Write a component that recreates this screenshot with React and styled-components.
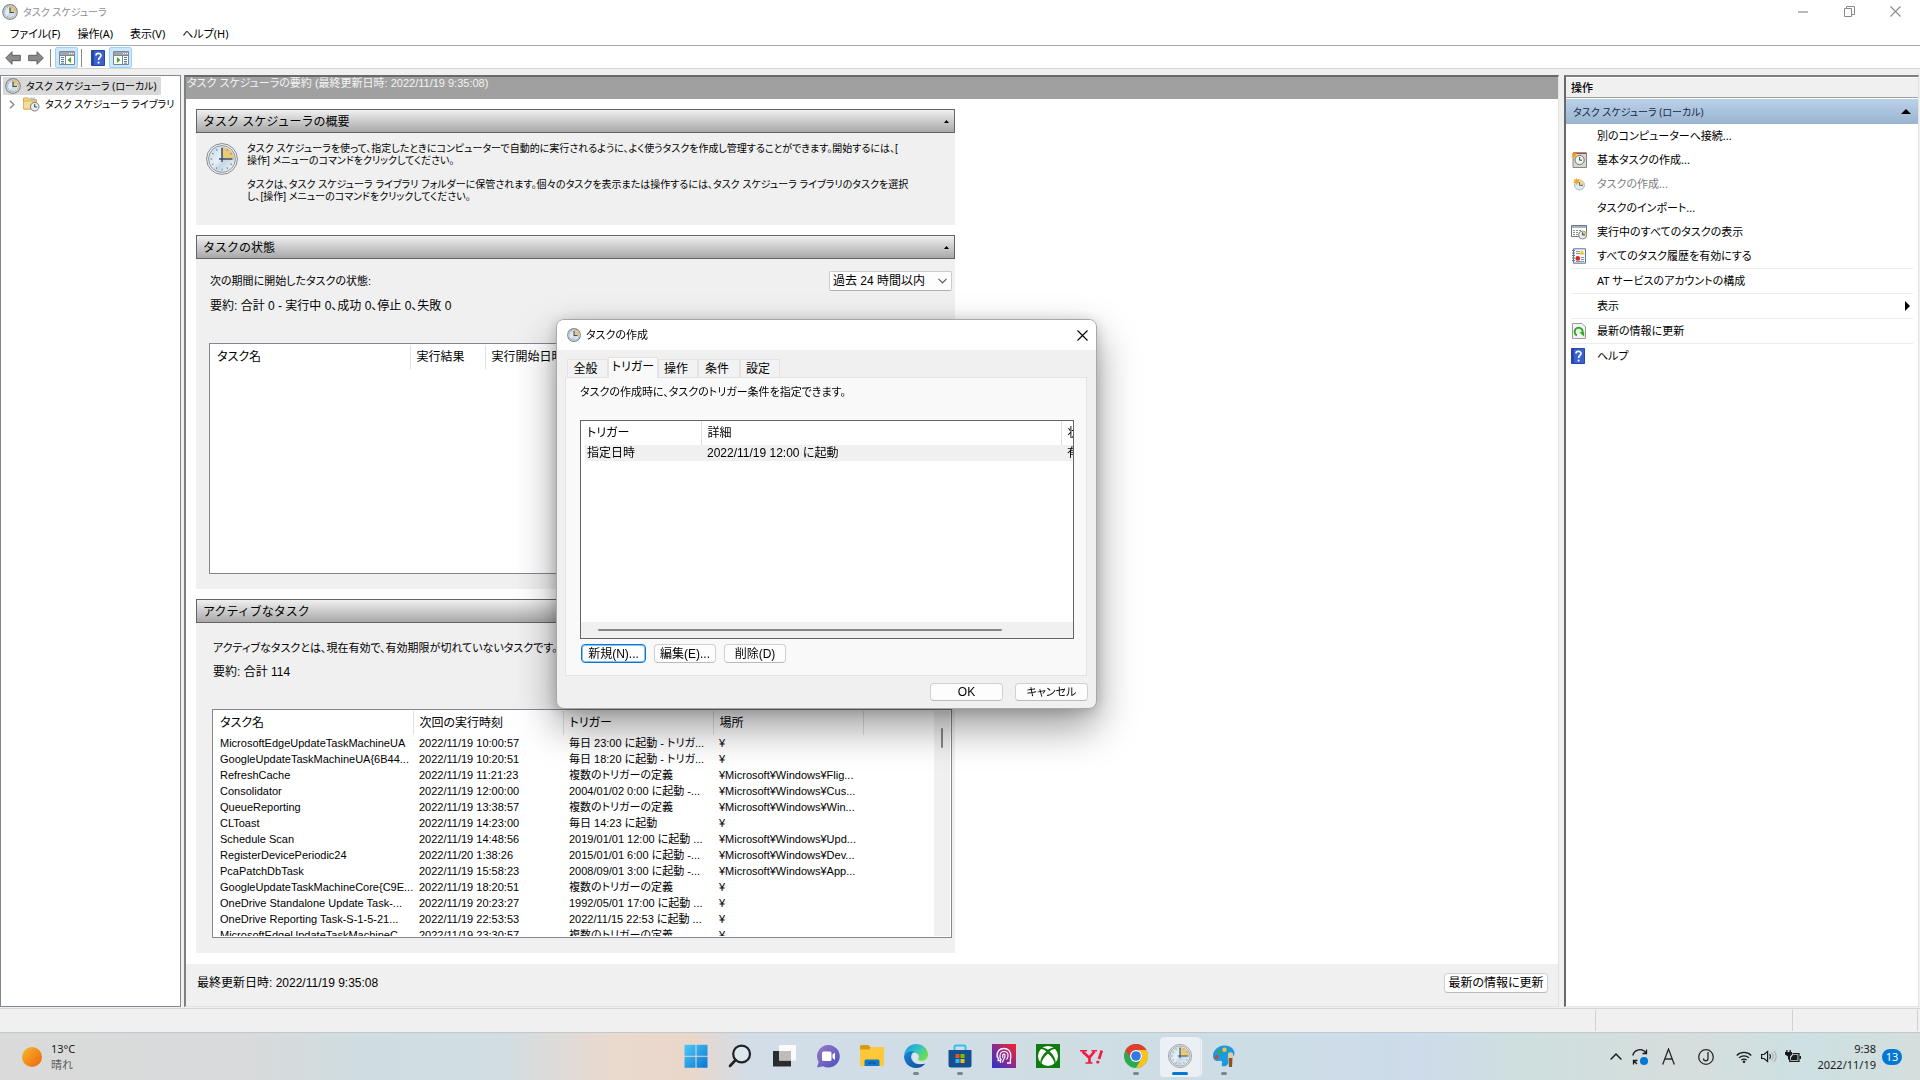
import React from "react";
import styled, { createGlobalStyle, css } from "styled-components";

const gothic = `"Liberation Sans", "Noto Sans CJK JP", sans-serif`;
const ui = `"Noto Sans", "Noto Sans CJK JP", sans-serif`;

const GlobalStyle = createGlobalStyle`
  *, *::before, *::after { box-sizing: border-box; }
  body {
    margin: 0;
    background: #f0f0f0;
    color: #000;
    font-family: ${gothic};
    font-size: 12px;
    line-height: 16px;
    font-feature-settings: "palt";
    overflow: hidden;
  }
  button, select { font: inherit; color: inherit; font-feature-settings: inherit; }
  button { padding: 0; border: 0; background: none; }
  h1, h2, h3, p, ul { margin: 0; padding: 0; font-weight: 400; font-size: inherit; }
  ul { list-style: none; }
  svg { display: block; flex: none; }
`;

/* ---------- window frame ---------- */
const Desktop = styled.div`
  display: flex;
  flex-direction: column;
  height: 100vh;
`;
const TitleBar = styled.header`
  display: flex;
  align-items: center;
  height: 23px;
  padding: 0 2px;
  background: #fff;
  color: #8f8f8f;
  font-family: ${ui};
  font-size: 10px;
`;
const WindowName = styled.span`
  margin-left: 5px;
`;
const Spacer = styled.div`
  flex: 1;
`;
const CaptionButton = styled.button`
  display: grid;
  place-items: center;
  width: 46px;
  height: 20px;
  color: #8a8a8a;
`;
const MenuBar = styled.nav`
  display: flex;
  gap: 17px;
  height: 23px;
  padding: 0 10px 1px;
  background: #fff;
  border-bottom: 1px solid #a9a9ad;
  font-family: ${ui};
  font-size: 11px;
`;
const ToolBar = styled.div`
  display: flex;
  align-items: center;
  height: 23px;
  padding: 1px 1px 0;
  background: #fff;
  border-bottom: 1px solid #d4d4d4;
`;
const ToolButton = styled.button`
  display: grid;
  place-items: center;
  width: 23px;
  height: 21px;
  border: 1px solid ${(p) => (p.$on ? "#99d1ff" : "transparent")};
  border-radius: 2px;
  background: ${(p) => (p.$on ? "#cce8ff" : "transparent")};
`;
const ToolRule = styled.span`
  width: 1px;
  height: 18px;
  margin: 0 4px 0 3px;
  background: #8a8a8a;
`;
const Workspace = styled.main`
  display: grid;
  grid-template-columns: 181px minmax(0, 1fr) 355px;
  gap: 3px;
  flex: 1;
  min-height: 0;
  padding: 6px 1px 1px 0;
`;
const StatusBar = styled.footer`
  display: grid;
  grid-template-columns: 1fr 197px 125px;
  height: 24px;
  border-top: 1px solid #d4d4d4;
  padding: 1px 2px 1px 0;
`;
const StatusCell = styled.span`
  border-right: 1px solid #d0d0d0;
`;

/* ---------- tree ---------- */
const TreePane = styled.aside`
  border: 1px solid #828790;
  background: #fff;
  padding: 1px 2px;
  font-family: ${ui};
  font-size: 10px;
  overflow: hidden;
  white-space: nowrap;
`;
const TreeRow = styled.li`
  display: flex;
  align-items: center;
  gap: 5px;
  height: 18px;
  width: fit-content;
  padding: 0 4px 0 ${(p) => p.$indent}px;
  background: ${(p) => (p.$selected ? "#d9d9d9" : "transparent")};
  border-radius: 1px;
`;

/* ---------- centre ---------- */
const CentrePane = styled.section`
  display: flex;
  flex-direction: column;
  min-width: 0;
  margin-right: 2px;
  border-style: solid;
  border-width: 2px 1px 1px 2px;
  border-color: #696969 #e3e3e3 #e3e3e3 #808080;
  background: #fff;
`;
const CentreHead = styled.h1`
  height: 22px;
  flex: none;
  padding-left: 1px;
  background: #a0a0a0;
  color: #f4f4f4;
  font-size: 11px;
  line-height: 12px;
`;
const Cards = styled.div`
  display: flex;
  flex-direction: column;
  gap: 10px;
  flex: 1;
  min-height: 0;
  padding: 10px;
`;
const Card = styled.section`
  max-width: 759px;
  background: #f0f0f0;
`;
const CardHead = styled.h2`
  display: flex;
  align-items: center;
  justify-content: space-between;
  height: 24px;
  padding: 1px 5px 0 6px;
  border: 1px solid #646464;
  background: linear-gradient(#f0f0f0, #a8a8a8);
  font-feature-settings: normal;
`;
const Overview = styled.div`
  display: flex;
  gap: 9px;
  min-height: 92px;
  padding: 10px;
  font-size: 10px;
  line-height: 12px;
`;
const Paragraph = styled.p`
  margin-bottom: 12px;
  white-space: nowrap;
`;
const StateBody = styled.div`
  padding: 12px 3px 15px 13px;
`;
const StateTop = styled.div`
  display: flex;
  align-items: center;
  justify-content: space-between;
  height: 20px;
  padding-left: 1px;
`;
const Small = styled.span`
  font-size: 11px;
`;
const Summary = styled.p`
  margin: 7px 0 29px 1px;
`;
const ActiveBody = styled.div`
  padding: 17px 3px 15px 16px;
`;
const ActiveNote = styled.p`
  margin: 0 0 8px 1px;
  font-size: 11px;
`;
const ActiveSummary = styled.p`
  margin: 0 0 29px 1px;
`;
const SelectBox = styled.label`
  position: relative;
  width: 123px;
  height: 20px;
`;
const Period = styled.select`
  appearance: none;
  width: 100%;
  height: 100%;
  padding: 0 20px 0 3px;
  border: 1px solid #ccc;
  border-bottom-color: #b0b0b0;
  border-radius: 2px;
  background: #fdfdfd;
`;
const SelectArrow = styled.span`
  position: absolute;
  right: 5px;
  top: 7px;
  pointer-events: none;
`;
const ListBox = styled.div`
  display: flex;
  height: ${(p) => p.$height}px;
  border: 1px solid #828790;
  background: #fff;
  padding: 1px;
  overflow: hidden;
`;
const ListMain = styled.div`
  flex: 1;
  min-width: 0;
  overflow: hidden;
`;
const Table = styled.table`
  table-layout: fixed;
  width: ${(p) => p.$width}px;
  border-collapse: collapse;
  white-space: nowrap;

  th, td {
    overflow: hidden;
    text-align: left;
    font-weight: 400;
    padding: 0 0 0 6px;
  }
  th { height: 24px; border-right: 1px solid #e0e0e0; }
  td { height: 16px; line-height: 16px; }
`;
const ScrollTrack = styled.div`
  width: 16px;
  flex: none;
  background: #f0f0f0;
  padding: 17px 7px;
`;
const ScrollThumb = styled.div`
  width: 2px;
  height: 20px;
  border-radius: 1px;
  background: #868686;
`;
const CentreFoot = styled.div`
  display: flex;
  justify-content: space-between;
  align-items: center;
  height: 42px;
  flex: none;
  padding: 0 10px 4px 11px;
  background: #f0f0f0;
`;
const PushButton = styled.button`
  height: ${(p) => p.$height || 20}px;
  width: ${(p) => p.$width}px;
  border: 1px solid #d0d0d0;
  border-bottom-color: #bababa;
  border-radius: 4px;
  background: #fdfdfd;
  line-height: 16px;
  white-space: nowrap;
  ${(p) =>
    p.$focus &&
    css`
      border-color: #0078d4;
      box-shadow: inset 0 0 0 1px #8cc2ec;
    `}
`;

/* ---------- actions ---------- */
const ActionsPane = styled.aside`
  border-style: solid;
  border-width: 2px 1px 1px 2px;
  border-color: #808080 #e3e3e3 #e3e3e3 #696969;
  background: #fff;
  font-family: ${ui};
  font-size: 11px;
`;
const ActionsTitle = styled.h2`
  height: 21px;
  padding: 1px 5px;
  border-top: 1px solid #fff;
  border-bottom: 1px solid #a0a0a0;
  background: #f0f0f0;
  font-weight: 500;
  line-height: 18px;
  margin-bottom: 1px;
`;
const ActionsGroup = styled.h3`
  display: flex;
  align-items: center;
  justify-content: space-between;
  height: 25px;
  padding: 0 7px;
  background: linear-gradient(#bad1e9, #9ab4d1);
  color: #1a2a44;
  font-size: 10px;
`;
const ActionItem = styled.li`
  height: ${(p) => (p.$rule ? 25 : 24)}px;
  margin: 0 5px;
  border-bottom: ${(p) => (p.$rule ? "1px solid #ececec" : "0")};
`;
const ActionButton = styled.button`
  display: grid;
  grid-template-columns: 16px 1fr auto;
  gap: 10px;
  align-items: center;
  width: 100%;
  height: 24px;
  padding-right: 3px;
  text-align: left;
  color: ${(p) => (p.disabled ? "#808080" : "#000")};
`;

/* ---------- dialog ---------- */
const Dialog = styled.div`
  position: fixed;
  left: 556px;
  top: 319px;
  width: 541px;
  border: 1px solid #a8a8a8;
  border-radius: 8px;
  background: #f0f0f0;
  box-shadow: 0 18px 40px rgba(0, 0, 0, 0.4), 0 2px 14px rgba(0, 0, 0, 0.18);
  overflow: hidden;
`;
const DialogTitle = styled.div`
  display: flex;
  align-items: center;
  gap: 5px;
  height: 30px;
  padding-left: 10px;
  background: #fff;
  font-family: ${ui};
  font-size: 11px;
`;
const DialogClose = styled.button`
  display: grid;
  place-items: center;
  width: 28px;
  height: 28px;
`;
const Tabs = styled.div`
  display: flex;
  align-items: flex-end;
  height: 27px;
  padding-left: 10px;
`;
const Tab = styled.button`
  width: ${(p) => p.$width}px;
  height: ${(p) => (p.$on ? 21 : 18)}px;
  padding: 0 ${(p) => (p.$on ? 0 : 4)}px ${(p) => (p.$on ? 2 : 0)}px 0;
  border: 1px solid #e3e3e3;
  border-bottom: 0;
  background: ${(p) => (p.$on ? "#f9f9f9" : "#f2f2f2")};
  margin-bottom: ${(p) => (p.$on ? -1 : 0)}px;
  z-index: ${(p) => (p.$on ? 1 : 0)};
  line-height: 16px;
`;
const TabPanel = styled.div`
  margin: 0 9px 0 8px;
  padding: 6px 12px 12px 14px;
  border: 1px solid #e3e3e3;
  background: #f9f9f9;
`;
const Hint = styled.p`
  margin-bottom: 20px;
  font-size: 11px;
`;
const TriggerBox = styled.div`
  display: flex;
  flex-direction: column;
  height: 219px;
  border: 1px solid #646464;
  background: #fff;
  overflow: hidden;
`;
const HScroll = styled.div`
  height: 16px;
  padding: 7px 71px 7px 17px;
  background: #f0f0f0;
`;
const HThumb = styled.div`
  height: 2px;
  border-radius: 1px;
  background: #868686;
`;
const TriggerRow = styled.tr`
  background: linear-gradient(90deg, #fff 4px, #f0f0f0 4px);
`;
const ButtonRow = styled.div`
  display: flex;
  gap: 8px;
  padding: 5px 0 0 1px;
`;
const DialogFoot = styled.div`
  display: flex;
  justify-content: flex-end;
  gap: 12px;
  padding: 7px 8px 7px;
`;

/* ---------- taskbar ---------- */
const TaskBar = styled.footer`
  display: grid;
  grid-template-columns: 1fr auto 1fr;
  align-items: center;
  height: 48px;
  flex: none;
  border-top: 1px solid #bfc8cc;
  background: linear-gradient(90deg, #dadada 0, #d8dadb 13%, #cfdde1 19%, #d1dde3 26%, #ead9cd 32%, #e9d7ca 36%, #d2dde8 39%, #cfdde3 55%, #cddde6 66%, #cddbea 74%, #cfdfde 80%, #d6dddd 88%, #cde0e2 94%, #d5dedd 100%);
  font-family: ${ui};
  font-size: 11px;
  color: #1a1a1a;
`;
const Weather = styled.button`
  display: flex;
  align-items: center;
  gap: 9px;
  width: fit-content;
  padding-left: 22px;
  text-align: left;
`;
const Muted = styled.span`
  display: block;
  color: #5c5c5c;
`;
const Apps = styled.div`
  display: flex;
  gap: 4px;
`;
const AppButton = styled.button`
  display: flex;
  flex-direction: column;
  align-items: center;
  width: 40px;
  height: 40px;
  padding-top: 7px;
  border-radius: 4px;
  ${(p) =>
    p.$state === "active" &&
    css`
      background: #eaf0f5;
      box-shadow: 2px 0 0 -1px #dfe7ec, 3px 0 0 -1px #eef3f6;
    `}
  &::after {
    content: "";
    width: ${(p) => (p.$state === "active" ? 16 : 6)}px;
    height: 3px;
    margin-top: 4px;
    border-radius: 2px;
    background: ${(p) =>
      p.$state === "active" ? "#0078d4" : p.$state === "open" ? "#7c858a" : "transparent"};
  }
`;
const Tray = styled.div`
  display: flex;
  align-items: center;
  justify-content: flex-end;
  padding-right: 18px;
`;
const TrayIcon = styled.button`
  display: grid;
  place-items: center;
  width: ${(p) => p.$width}px;
  height: 40px;
`;
const Clock = styled.button`
  margin: 0 6px 0 9px;
  text-align: right;
`;
const Line = styled.span`
  display: block;
`;
const Badge = styled.span`
  width: 20px;
  border-radius: 8px;
  background: #0078d4;
  color: #fff;
  text-align: center;
`;

/* ---------- drawings ---------- */
function ClockIcon({ size = 16 }) {
  const ticks = Array.from({ length: 12 }, (_, i) => i * 30);
  return (
    <svg width={size} height={size} viewBox="0 0 32 32" aria-hidden="true">
      <defs>
        <linearGradient id="face" x1="0" y1="0" x2="1" y2="1">
          <stop offset="0" stopColor="#c3d6e4" />
          <stop offset=".45" stopColor="#e9f1f7" />
          <stop offset=".6" stopColor="#c6d8e5" />
          <stop offset="1" stopColor="#fbfdfe" />
        </linearGradient>
      </defs>
      <circle cx="16" cy="16" r={size > 20 ? 15.4 : 14.6} fill="#f4f4f4" stroke="#85888b" strokeWidth={size > 20 ? 1 : 2.4} />
      <circle cx="16" cy="16" r={size > 20 ? 13.4 : 12} fill="url(#face)" stroke="#8f9498" strokeWidth="1" />
      <path d="M16 16V4A12 12 0 0 1 28 16z" fill="#edc877" />
      {ticks.map((a) => (
        <path key={a} d="M16 4.500v1.800" stroke="#7892ad" strokeWidth="1.200" transform={`rotate(${a} 16 16)`} />
      ))}
      <path d={size > 20 ? "M16 5v14M13 16h13" : "M16 7v11M15 17h9"} stroke="#33526f" strokeWidth={size > 20 ? 1.5 : 2.4} fill="none" />
    </svg>
  );
}
const Arrow = ({ flip }) => (
  <svg width="16" height="16" viewBox="0 0 16 16" aria-hidden="true">
    <path
      d="M.7 8 7 1.700v3.600h8.300v5.400H7v3.600z"
      fill="#8a8a8a"
      stroke="#5f5f5f"
      transform={flip ? "matrix(-1 0 0 1 16 0)" : undefined}
    />
  </svg>
);
const PaneIcon = ({ right }) => (
  <svg width="16" height="14" viewBox="0 0 16 14" aria-hidden="true">
    <g transform={right ? "matrix(-1 0 0 1 16 0)" : undefined}>
      <path d="M.5.5h15v13H.5z" fill="#fff" stroke="#7e8790" />
      <path d="M1 1h14v3H1z" fill="#9ea7ae" />
      <path d="M1 4.500h14M6.500 5v8" stroke="#7e8790" />
      <path d="M2 6.500h3M2 8.500h3M2 10.500h3M2 12.200h3" stroke="#4f7fae" />
      <path d="M8.500 9l3.500-3v6z" fill="#35b01c" />
    </g>
    <path d="M10 2.500h1M12 2.500h1M14 2.500h1" stroke="#fff" />
  </svg>
);
const HelpIcon = () => (
  <svg width="14" height="16" viewBox="0 0 14 16" aria-hidden="true">
    <path d="M.5.5h13v15H.5z" fill="#3a62ce" stroke="#2546a5" />
    <path d="M1 1h2v14H1z" fill="#2247b1" />
    <path d="M5 5.500C5 2.700 10 2.700 10 5.400 10 7.400 7.600 7.400 7.600 10" fill="none" stroke="#fff" strokeWidth="1.700" />
    <circle cx="7.600" cy="12.600" r="1.100" fill="#fff" />
  </svg>
);
const FolderClock = () => (
  <svg width="17" height="16" viewBox="0 0 17 16" aria-hidden="true">
    <path d="M.5 2h5l1 1.500h7V13H.5z" fill="#f3d384" stroke="#d9ab48" />
    <path d="M7 1.500h5v2H7z" fill="#a9cbe8" />
    <path d="M.5 5h13v8H.5z" fill="#f8dd98" stroke="#dcb25a" />
    <circle cx="11.700" cy="10.700" r="4.300" fill="#e7eef3" stroke="#75797c" />
    <path d="M11.700 8v3H14" fill="none" stroke="#2d465c" />
  </svg>
);
const Chevron = ({ d, w, h, color = "#5a5a5a", sw = 1.2 }) => (
  <svg width={w} height={h} viewBox={`0 0 ${w} ${h}`} aria-hidden="true">
    <path d={d} fill="none" stroke={color} strokeWidth={sw} />
  </svg>
);
const Triangle = ({ w, h, d }) => (
  <svg width={w} height={h} viewBox={`0 0 ${w} ${h}`} aria-hidden="true">
    <path d={d} fill="#000" />
  </svg>
);
const Cross = () => (
  <svg width="11" height="11" viewBox="0 0 11 11" aria-hidden="true">
    <path d="M.5.5l10 10M10.500.5l-10 10" stroke="currentColor" strokeWidth="1.100" />
  </svg>
);
const Spark = () => <path d="M4 0l1 2 2.600-.6L6.500 4 8 6 5.500 6 4 8.300 3 6 .2 5.600 2 4 .8 1.600 3 2z" fill="#f6a21b" />;
const BasicTaskIcon = () => (
  <svg width="16" height="16" viewBox="0 0 16 16" aria-hidden="true">
    <path d="M2 1h13.500v14.500H2z" fill="#d8d4cf" stroke="#8c8580" />
    <path d="M2 .5h13.500V2H2z" fill="#9c4f40" />
    <circle cx="8.600" cy="8" r="4.600" fill="#eef3ee" stroke="#6b7a70" />
    <path d="M8.600 5v3.200H11" fill="none" stroke="#2f4a3c" />
    <g transform="scale(.75)"><Spark /></g>
  </svg>
);
const NewTaskIcon = () => (
  <svg width="16" height="16" viewBox="0 0 16 16" aria-hidden="true">
    <circle cx="8.500" cy="9" r="5" fill="#dfe9ee" stroke="#a9bcc4" />
    <path d="M8.500 9V4A5 5 0 0 1 13.500 9z" fill="#f3d28e" />
    <path d="M8.500 6v3.400H12" fill="none" stroke="#5b6c78" />
    <g transform="translate(2 2) scale(.85)"><Spark /></g>
  </svg>
);
const RunningIcon = () => (
  <svg width="16" height="16" viewBox="0 0 16 16" aria-hidden="true">
    <path d="M.5 1.500h15v11H.5z" fill="#fff" stroke="#6f767b" />
    <path d="M1 2h14v2H1z" fill="#a7b4bd" />
    <path d="M2 6.500h9M2 8.500h7M2 10.500h5" stroke="#8a8f93" strokeDasharray="2 1" />
    <circle cx="11.600" cy="11" r="4" fill="#e6edf2" stroke="#84898c" />
    <path d="M11.600 11V7.300A3.700 3.700 0 0 1 15.300 11z" fill="#e9c87c" />
    <path d="M11.600 8.400V11H14" fill="none" stroke="#2d465c" />
  </svg>
);
const HistoryIcon = () => (
  <svg width="16" height="16" viewBox="0 0 16 16" aria-hidden="true">
    <path d="M2.500.8h12v14.400h-12z" fill="#f6f8fb" stroke="#56719c" />
    <path d="M1 2.500h3M1 5h3M1 7.500h3M1 10h3M1 12.500h3" stroke="#777" />
    <path d="M5 3.500h4M5 5.500h4M10 9.500h3M10 11.500h3M5 13.500h8" stroke="#8a94a3" />
    <path d="M11 2l2.600 4.600H8.400z" fill="#f1c51c" />
    <circle cx="6.800" cy="10.400" r="2.300" fill="#d02b1f" />
  </svg>
);
const RefreshIcon = () => (
  <svg width="16" height="16" viewBox="0 0 16 16" aria-hidden="true">
    <path d="M1.500.5H11L14.500 4v11.500h-13z" fill="#f4f5f4" stroke="#9a9a9a" />
    <path d="M6 12.300A4 4 0 1 1 11.200 10.500" fill="none" stroke="#2fac26" strokeWidth="2" />
    <path d="M8.200 9.200h5v4.600z" fill="#2fac26" />
  </svg>
);

const Svg24 = ({ children }) => (
  <svg width="24" height="24" viewBox="0 0 24 24" aria-hidden="true">{children}</svg>
);
const appIcons = {
  Windows: (
    <Svg24>
      <defs><linearGradient id="win" x1="0" y1="0" x2="1" y2="1"><stop offset="0" stopColor="#4ccaf8" /><stop offset="1" stopColor="#0a74d2" /></linearGradient></defs>
      <path d="M.5.8h11v11H.5zM12.500.8h11v11h-11zM.5 12.800h11v11H.5zM12.500 12.800h11v11h-11z" fill="url(#win)" />
    </Svg24>
  ),
  検索: (
    <Svg24>
      <circle cx="13.600" cy="10" r="8.400" fill="#dde7ee" stroke="#222" strokeWidth="2.200" />
      <path d="M7.600 16L2 22" stroke="#222" strokeWidth="2.600" strokeLinecap="round" />
    </Svg24>
  ),
  "タスク ビュー": (
    <Svg24>
      <path d="M1 7h18v15.500H1z" fill="#2c2c2c" />
      <path d="M7 1h17v15.500H7z" fill="#fbfbfb" />
      <path d="M7 7h12v9.500H7z" fill="#bdbdbd" />
    </Svg24>
  ),
  チャット: (
    <Svg24>
      <defs><linearGradient id="chat" x1="0" y1="0" x2="1" y2="1"><stop offset="0" stopColor="#9a7cc0" /><stop offset="1" stopColor="#4a4fc4" /></linearGradient></defs>
      <path d="M12.500 1a11.300 11.300 0 1 1-5.300 21.300L1 23.500l1.600-5.500A11.300 11.300 0 0 1 12.500 1z" fill="url(#chat)" />
      <rect x="6" y="7.500" width="9.500" height="9.500" rx="1.500" fill="#fff" />
      <path d="M16.500 10.500L19 8.500v7.500l-2.500-2z" fill="#fff" />
    </Svg24>
  ),
  エクスプローラー: (
    <Svg24>
      <path d="M0 2.500q0-1.500 1.500-1.500h7l2 2.500V6H0z" fill="#d99a0b" />
      <path d="M0 5.500h9L11.500 3H24v19H0z" fill="#fdc93a" />
      <path d="M4.500 22v-5q0-1.500 1.500-1.500h12q1.500 0 1.500 1.500v5z" fill="#1378c6" />
      <path d="M8 19h8" stroke="#0c5a9c" strokeWidth="1.500" />
    </Svg24>
  ),
  Edge: (
    <Svg24>
      <defs>
        <linearGradient id="edgeTop" x1="0" y1="0" x2="1" y2=".6"><stop offset="0" stopColor="#1f8fd8" /><stop offset=".5" stopColor="#2fc0cf" /><stop offset="1" stopColor="#6be04c" /></linearGradient>
        <linearGradient id="edgeLow" x1="0" y1="0" x2="1" y2="1"><stop offset="0" stopColor="#1b85d8" /><stop offset="1" stopColor="#0b4a9c" /></linearGradient>
      </defs>
      <path d="M0 12C.5 5 5.500 0 12 0c7 0 12 5 12 10.500 0 4-3 6.300-6.500 6.300-2.500 0-3.800-1-3-2 1.300-1.500 1-5-3.500-6C6.500 7.800 2 9 0 12z" fill="url(#edgeTop)" />
      <path d="M0 12c2-4 7-5.500 10.500-4.300C7 9 6.500 13 8 16c2 4 7.500 5.500 13.500 3.200C19 22.500 15.500 24 12 24 5 24 0 18.500 0 12z" fill="url(#edgeLow)" />
      <path d="M11 8.900c-4 2-2.500 8 2 10 3 1.300 6 1 8.500.3l1-1.500c-5 2.300-10 .5-10-3.500 0-2 1-2.600.7-4z" fill="#dbe7ee" />
    </Svg24>
  ),
  Store: (
    <Svg24>
      <path d="M6.500 6V3q0-1.500 1.500-1.500h8q1.500 0 1.500 1.500v3" fill="none" stroke="#36c0f2" strokeWidth="2" />
      <path d="M.5 6h23v15q0 2.500-2.500 2.500H3Q.5 23.500.5 21z" fill="#14508d" />
      <path d="M7.500 10h4v4h-4z" fill="#f25022" /><path d="M12.500 10h4v4h-4z" fill="#7fba00" />
      <path d="M7.500 15h4v4h-4z" fill="#38b6f1" /><path d="M12.500 15h4v4h-4z" fill="#ffb900" />
    </Svg24>
  ),
  Assistant: (
    <Svg24>
      <defs><linearGradient id="ast" x1="0" y1="1" x2="1" y2="0"><stop offset="0" stopColor="#2b35c6" /><stop offset=".5" stopColor="#8d2a93" /><stop offset="1" stopColor="#fb2323" /></linearGradient></defs>
      <path d="M0 0h24v24H0z" fill="url(#ast)" />
      <path d="M8.500 19v-2.500H6.200V14L5 12.500C5 7 8 4.500 12 4.500s6.800 3 6.800 7.500c0 3-.8 4-.3 7h-3.500" fill="none" stroke="#fff" strokeWidth="1.300" />
      <path d="M9.500 16c-2.500-2-2.300-8.500 2.500-8.500s5 5.500 2.500 8M10.500 18.500c0-3 3-4 2.500-7.500-.4-1.500-2.300-1-2.300.8v2" fill="none" stroke="#fff" strokeWidth="1.200" />
    </Svg24>
  ),
  Xbox: (
    <Svg24>
      <path d="M0 0h24v24H0z" fill="#107c10" />
      <circle cx="12" cy="12" r="10" fill="#fff" />
      <path d="M4.500 4.200C8 3.200 10 4.600 12 5.800c2-1.200 4-2.600 7.500-1.600l.8 1C17.500 4.500 15.500 6 13.700 7.600c3.500 3.200 6.300 7.200 6 12.200l-1 .6C18.300 16 15.500 12.500 12 9.400 8.500 12.500 5.700 16 5.300 20.400l-1-.6c-.3-5 2.500-9 6-12.200C8.500 6 6.500 4.500 3.700 5.200z" fill="#107c10" />
    </Svg24>
  ),
  "Yahoo!": (
    <Svg24>
      <g fill="none" stroke="#f5173e">
        <path d="M2.500 7.500l6.500 6M14.500 7.500L9.500 13.500V19" strokeWidth="2.600" />
        <path d="M0 6.700h7M11.500 6.700H17M5.500 19h7" strokeWidth="1.500" />
        <path d="M21.800 6.500L19 15" strokeWidth="2.600" />
      </g>
      <circle cx="17.800" cy="18" r="1.600" fill="#f5173e" />
    </Svg24>
  ),
  Chrome: (
    <Svg24>
      <circle cx="12" cy="12" r="12" fill="#2da94f" />
      <path d="M1.600 6A12 12 0 0 1 22.400 6H12a6 6 0 0 0-5.300 8.600z" fill="#e33b2e" />
      <path d="M22.400 6A12 12 0 0 1 12 24l5.200-9A6 6 0 0 0 12 6z" fill="#fcc31e" />
      <circle cx="12" cy="12" r="6" fill="#fff" /><circle cx="12" cy="12" r="4.800" fill="#3077e8" />
    </Svg24>
  ),
  "タスク スケジューラ": <ClockIcon size={24} />,
  ペイント: (
    <Svg24>
      <path d="M12 1.500C18 1 22.500 5 22.500 9c0 3-2 4-4.500 4-2 0-2.800 1.500-2 3.500 1 3-1 6-4.500 6-2 0-2-2-1.500-3.500.5-2-1-2.500-3-2C4 17.500 1 16 1 12 1 6 6 2 12 1.500z" fill="#1c9ae0" />
      <circle cx="4.500" cy="13" r="2" fill="#d8432b" /><circle cx="7.500" cy="8" r="2" fill="#47a63b" /><circle cx="12.500" cy="5.800" r="2.200" fill="#f4c430" />
      <path d="M16 9.500q2.500-2.500 5 0V14h-5z" fill="#e8cba2" /><path d="M16.500 14h4l-.5 9h-3z" fill="#8a5424" />
    </Svg24>
  ),
};
const apps = [
  ["Windows"], ["検索"], ["タスク ビュー"], ["チャット"], ["エクスプローラー"], ["Edge", "open"], ["Store", "open"],
  ["Assistant"], ["Xbox"], ["Yahoo!"], ["Chrome", "open"], ["タスク スケジューラ", "active"], ["ペイント", "open"],
];

/* ---------- data ---------- */
const tasks = [
  ["MicrosoftEdgeUpdateTaskMachineUA", "2022/11/19 10:00:57", "毎日 23:00 に起動 - トリガ...", "¥"],
  ["GoogleUpdateTaskMachineUA{6B44...", "2022/11/19 10:20:51", "毎日 18:20 に起動 - トリガ...", "¥"],
  ["RefreshCache", "2022/11/19 11:21:23", "複数のトリガーの定義", "¥Microsoft¥Windows¥Flig..."],
  ["Consolidator", "2022/11/19 12:00:00", "2004/01/02 0:00 に起動 -...", "¥Microsoft¥Windows¥Cus..."],
  ["QueueReporting", "2022/11/19 13:38:57", "複数のトリガーの定義", "¥Microsoft¥Windows¥Win..."],
  ["CLToast", "2022/11/19 14:23:00", "毎日 14:23 に起動", "¥"],
  ["Schedule Scan", "2022/11/19 14:48:56", "2019/01/01 12:00 に起動 ...", "¥Microsoft¥Windows¥Upd..."],
  ["RegisterDevicePeriodic24", "2022/11/20 1:38:26", "2015/01/01 6:00 に起動 -...", "¥Microsoft¥Windows¥Dev..."],
  ["PcaPatchDbTask", "2022/11/19 15:58:23", "2008/09/01 3:00 に起動 -...", "¥Microsoft¥Windows¥App..."],
  ["GoogleUpdateTaskMachineCore{C9E...", "2022/11/19 18:20:51", "複数のトリガーの定義", "¥"],
  ["OneDrive Standalone Update Task-...", "2022/11/19 20:23:27", "1992/05/01 17:00 に起動 ...", "¥"],
  ["OneDrive Reporting Task-S-1-5-21...", "2022/11/19 22:53:53", "2022/11/15 22:53 に起動 ...", "¥"],
  ["MicrosoftEdgeUpdateTaskMachineC...", "2022/11/19 23:30:57", "複数のトリガーの定義", "¥"],
];
const actions = [
  { label: "別のコンピューターへ接続..." },
  { label: "基本タスクの作成...", icon: <BasicTaskIcon /> },
  { label: "タスクの作成...", icon: <NewTaskIcon />, disabled: true },
  { label: "タスクのインポート..." },
  { label: "実行中のすべてのタスクの表示", icon: <RunningIcon /> },
  { label: "すべてのタスク履歴を有効にする", icon: <HistoryIcon />, rule: true },
  { label: "AT サービスのアカウントの構成", rule: true },
  { label: "表示", rule: true, more: true },
  { label: "最新の情報に更新", icon: <RefreshIcon />, rule: true },
  { label: "ヘルプ", icon: <HelpIcon /> },
];

const Collapse = () => <Triangle w={5} h={3} d="M2.500 0L5 3H0z" />;

function CreateTaskDialog() {
  return (
    <Dialog role="dialog" aria-label="タスクの作成">
      <DialogTitle>
        <ClockIcon size={14} />
        <span>タスクの作成</span>
        <Spacer />
        <DialogClose aria-label="閉じる"><Cross /></DialogClose>
      </DialogTitle>
      <Tabs role="tablist">
        <Tab role="tab" $width={41}>全般</Tab>
        <Tab role="tab" $width={50} $on aria-selected="true">トリガー</Tab>
        <Tab role="tab" $width={40}>操作</Tab>
        <Tab role="tab" $width={42}>条件</Tab>
        <Tab role="tab" $width={40}>設定</Tab>
      </Tabs>
      <TabPanel role="tabpanel">
        <Hint>タスクの作成時に、タスクのトリガー条件を指定できます。</Hint>
        <TriggerBox>
          <ListMain>
            <Table $width={530}>
              <colgroup><col width="120" /><col width="360" /><col width="50" /></colgroup>
              <thead><tr><th>トリガー</th><th>詳細</th><th>状態</th></tr></thead>
              <tbody>
                <TriggerRow><td>指定日時</td><td>2022/11/19 12:00 に起動</td><td>有効</td></TriggerRow>
              </tbody>
            </Table>
          </ListMain>
          <HScroll><HThumb /></HScroll>
        </TriggerBox>
        <ButtonRow>
          <PushButton $width={65} $height={19} $focus>新規(N)...</PushButton>
          <PushButton $width={62} $height={19}>編集(E)...</PushButton>
          <PushButton $width={62} $height={19}>削除(D)</PushButton>
        </ButtonRow>
      </TabPanel>
      <DialogFoot>
        <PushButton $width={73} $height={18}>OK</PushButton>
        <PushButton $width={73} $height={18}><Small>キャンセル</Small></PushButton>
      </DialogFoot>
    </Dialog>
  );
}

export default function App() {
  return (
    <Desktop>
      <GlobalStyle />
      <TitleBar>
        <ClockIcon />
        <WindowName>タスク スケジューラ</WindowName>
        <Spacer />
        <CaptionButton aria-label="最小化"><Chevron w={10} h={2} d="M0 1h10" color="currentColor" /></CaptionButton>
        <CaptionButton aria-label="元に戻す">
          <Chevron w={11} h={11} d="M.5 2.500h7v8h-7zM2.500 2.500V.5h8v8h-3" color="currentColor" sw={1} />
        </CaptionButton>
        <CaptionButton aria-label="閉じる"><Cross /></CaptionButton>
      </TitleBar>
      <MenuBar>
        <button>ファイル(F)</button>
        <button>操作(A)</button>
        <button>表示(V)</button>
        <button>ヘルプ(H)</button>
      </MenuBar>
      <ToolBar>
        <ToolButton aria-label="戻る"><Arrow /></ToolButton>
        <ToolButton aria-label="進む"><Arrow flip /></ToolButton>
        <ToolRule />
        <ToolButton $on aria-label="コンソール ツリー"><PaneIcon /></ToolButton>
        <ToolRule />
        <ToolButton aria-label="ヘルプ"><HelpIcon /></ToolButton>
        <ToolButton $on aria-label="操作ウィンドウ"><PaneIcon right /></ToolButton>
      </ToolBar>

      <Workspace>
        <TreePane>
          <ul>
            <TreeRow $selected $indent={2}><ClockIcon /><span>タスク スケジューラ (ローカル)</span></TreeRow>
            <TreeRow $indent={6}>
              <Chevron w={9} h={9} d="M1 .8l3.800 3.700L1 8.200" color="#8c8c8c" sw={1.5} />
              <FolderClock />
              <span>タスク スケジューラ ライブラリ</span>
            </TreeRow>
          </ul>
        </TreePane>

        <CentrePane>
          <CentreHead>タスク スケジューラの要約 (最終更新日時: 2022/11/19 9:35:08)</CentreHead>
          <Cards>
            <Card>
              <CardHead>タスク スケジューラの概要<Collapse /></CardHead>
              <Overview>
                <ClockIcon size={32} />
                <div>
                  <Paragraph>
                    タスク スケジューラを使って、指定したときにコンピューターで自動的に実行されるように、よく使うタスクを作成し管理することができます。開始するには、[<br />
                    操作] メニューのコマンドをクリックしてください。
                  </Paragraph>
                  <Paragraph>
                    タスクは、タスク スケジューラ ライブラリ フォルダーに保管されます。個々のタスクを表示または操作するには、タスク スケジューラ ライブラリのタスクを選択<br />
                    し、[操作] メニューのコマンドをクリックしてください。
                  </Paragraph>
                </div>
              </Overview>
            </Card>

            <Card>
              <CardHead>タスクの状態<Collapse /></CardHead>
              <StateBody>
                <StateTop>
                  <Small>次の期間に開始したタスクの状態:</Small>
                  <SelectBox>
                    <Period aria-label="期間"><option>過去 24 時間以内</option></Period>
                    <SelectArrow><Chevron w={9} h={6} d="M.5.800l4 4 4-4" /></SelectArrow>
                  </SelectBox>
                </StateTop>
                <Summary>要約: 合計 0 - 実行中 0、成功 0、停止 0、失敗 0</Summary>
                <ListBox $height={231}>
                  <ListMain>
                    <Table $width={736}>
                      <colgroup><col width="199" /><col width="75" /><col width="150" /><col /></colgroup>
                      <thead><tr><th>タスク名</th><th>実行結果</th><th>実行開始日時</th><th>実行終了日時</th></tr></thead>
                    </Table>
                  </ListMain>
                </ListBox>
              </StateBody>
            </Card>

            <Card>
              <CardHead>アクティブなタスク<Collapse /></CardHead>
              <ActiveBody>
                <ActiveNote>アクティブなタスクとは、現在有効で、有効期限が切れていないタスクです。</ActiveNote>
                <ActiveSummary>要約: 合計 114</ActiveSummary>
                <ListBox $height={229}>
                  <ListMain>
                    <Table $width={649}>
                      <colgroup><col width="199" /><col width="150" /><col width="150" /><col width="150" /></colgroup>
                      <thead><tr><th>タスク名</th><th>次回の実行時刻</th><th>トリガー</th><th>場所</th></tr></thead>
                      <tbody>
                        {tasks.map((row) => (
                          <tr key={row[0]}>
                            {row.map((text) => (
                              <td key={text}><Small>{text}</Small></td>
                            ))}
                          </tr>
                        ))}
                      </tbody>
                    </Table>
                  </ListMain>
                  <ScrollTrack><ScrollThumb /></ScrollTrack>
                </ListBox>
              </ActiveBody>
            </Card>
          </Cards>
          <CentreFoot>
            <span>最終更新日時: 2022/11/19 9:35:08</span>
            <PushButton $width={104}>最新の情報に更新</PushButton>
          </CentreFoot>
        </CentrePane>

        <ActionsPane>
          <ActionsTitle>操作</ActionsTitle>
          <ActionsGroup>
            タスク スケジューラ (ローカル)
            <Triangle w={10} h={5} d="M5 0l5 5H0z" />
          </ActionsGroup>
          <ul>
            {actions.map((a) => (
              <ActionItem key={a.label} $rule={a.rule}>
                <ActionButton disabled={a.disabled}>
                  {a.icon || <span />}
                  <span>{a.label}</span>
                  {a.more && <Triangle w={5} h={10} d="M0 0l5 5-5 5z" />}
                </ActionButton>
              </ActionItem>
            ))}
          </ul>
        </ActionsPane>
      </Workspace>
      <StatusBar><StatusCell /><StatusCell /><StatusCell /></StatusBar>

      <TaskBar>
        <Weather>
          <svg width="20" height="20" viewBox="0 0 20 20" aria-hidden="true">
            <defs><linearGradient id="sun" x1="0" y1="0" x2="1" y2="1"><stop offset="0" stopColor="#f4bc2c" /><stop offset="1" stopColor="#f0610c" /></linearGradient></defs>
            <circle cx="10" cy="10" r="10" fill="url(#sun)" />
          </svg>
          <span>13°C<Muted>晴れ</Muted></span>
        </Weather>
        <Apps>
          {apps.map(([name, state]) => (
            <AppButton key={name} $state={state} aria-label={name}>{appIcons[name]}</AppButton>
          ))}
        </Apps>
        <Tray>
          <TrayIcon $width={24} aria-label="隠れているインジケーター"><Chevron w={12} h={7} d="M.6 6.400L6 1l5.400 5.400" color="#1a1a1a" sw={1.4} /></TrayIcon>
          <TrayIcon $width={24} aria-label="更新">
            <svg width="16" height="16" viewBox="0 0 16 16" aria-hidden="true">
              <path d="M.8 6.500A7.300 7.300 0 0 1 14 4M14.500.5V4.500H10.500M1.500 15.500v-4h4M1.500 11.500L5 15" fill="none" stroke="#1a1a1a" strokeWidth="1.300" />
              <circle cx="12" cy="12" r="4" fill="#0078d4" />
            </svg>
          </TrayIcon>
          <TrayIcon $width={32} aria-label="IME">
            <svg width="13" height="17" viewBox="0 0 13 17" aria-hidden="true"><path d="M.7 16.500L6.500 1l5.800 15.500M2.800 11h7.400" fill="none" stroke="#2a2a2a" strokeWidth="1.300" /></svg>
          </TrayIcon>
          <TrayIcon $width={44} aria-label="入力方式">
            <svg width="16" height="16" viewBox="0 0 16 16" aria-hidden="true">
              <circle cx="8" cy="8" r="7.300" fill="none" stroke="#2a2a2a" strokeWidth="1.300" />
              <path d="M10 3v6.500c0 3-4.500 3-4.500 0" fill="none" stroke="#2a2a2a" strokeWidth="1.300" />
            </svg>
          </TrayIcon>
          <TrayIcon $width={32} aria-label="ネットワーク">
            <svg width="16" height="12" viewBox="0 0 16 12" aria-hidden="true">
              <path d="M.7 4.500a10.300 10.300 0 0 1 14.600 0M3 6.900a7 7 0 0 1 10 0M5.300 9.200a3.800 3.800 0 0 1 5.400 0" fill="none" stroke="#1a1a1a" strokeWidth="1.200" />
              <circle cx="8" cy="10.700" r="1.300" fill="#1a1a1a" />
            </svg>
          </TrayIcon>
          <TrayIcon $width={18} aria-label="音量">
            <svg width="16" height="13" viewBox="0 0 16 13" aria-hidden="true">
              <path d="M.6 4.500v4H3l3.600 3V1.500L3 4.500zM8.500 4.300a3 3 0 0 1 0 4.400" fill="none" stroke="#1a1a1a" strokeWidth="1.200" />
              <path d="M10.500 2.500a5.500 5.500 0 0 1 0 8M12.800.8a8 8 0 0 1 0 11.400" fill="none" stroke="#9aa5a8" />
            </svg>
          </TrayIcon>
          <TrayIcon $width={30} aria-label="バッテリー">
            <svg width="16" height="13" viewBox="0 0 16 13" aria-hidden="true">
              <path d="M7.500 3.600H14v7.800H4.700V8.500" fill="none" stroke="#1a1a1a" strokeWidth="1.200" />
              <path d="M8 5h4.500v5H6V7.500zM14.500 6H16v3h-1.500zM0 2h7v2.500L5 6.500v3H3v-3L0 4.500zM1.200 0h1.300v2H1.200zM4.500 0h1.300v2H4.500z" fill="#1a1a1a" />
            </svg>
          </TrayIcon>
          <Clock><Line>9:38</Line><Line>2022/11/19</Line></Clock>
          <Badge>13</Badge>
        </Tray>
      </TaskBar>
      <CreateTaskDialog />
    </Desktop>
  );
}
